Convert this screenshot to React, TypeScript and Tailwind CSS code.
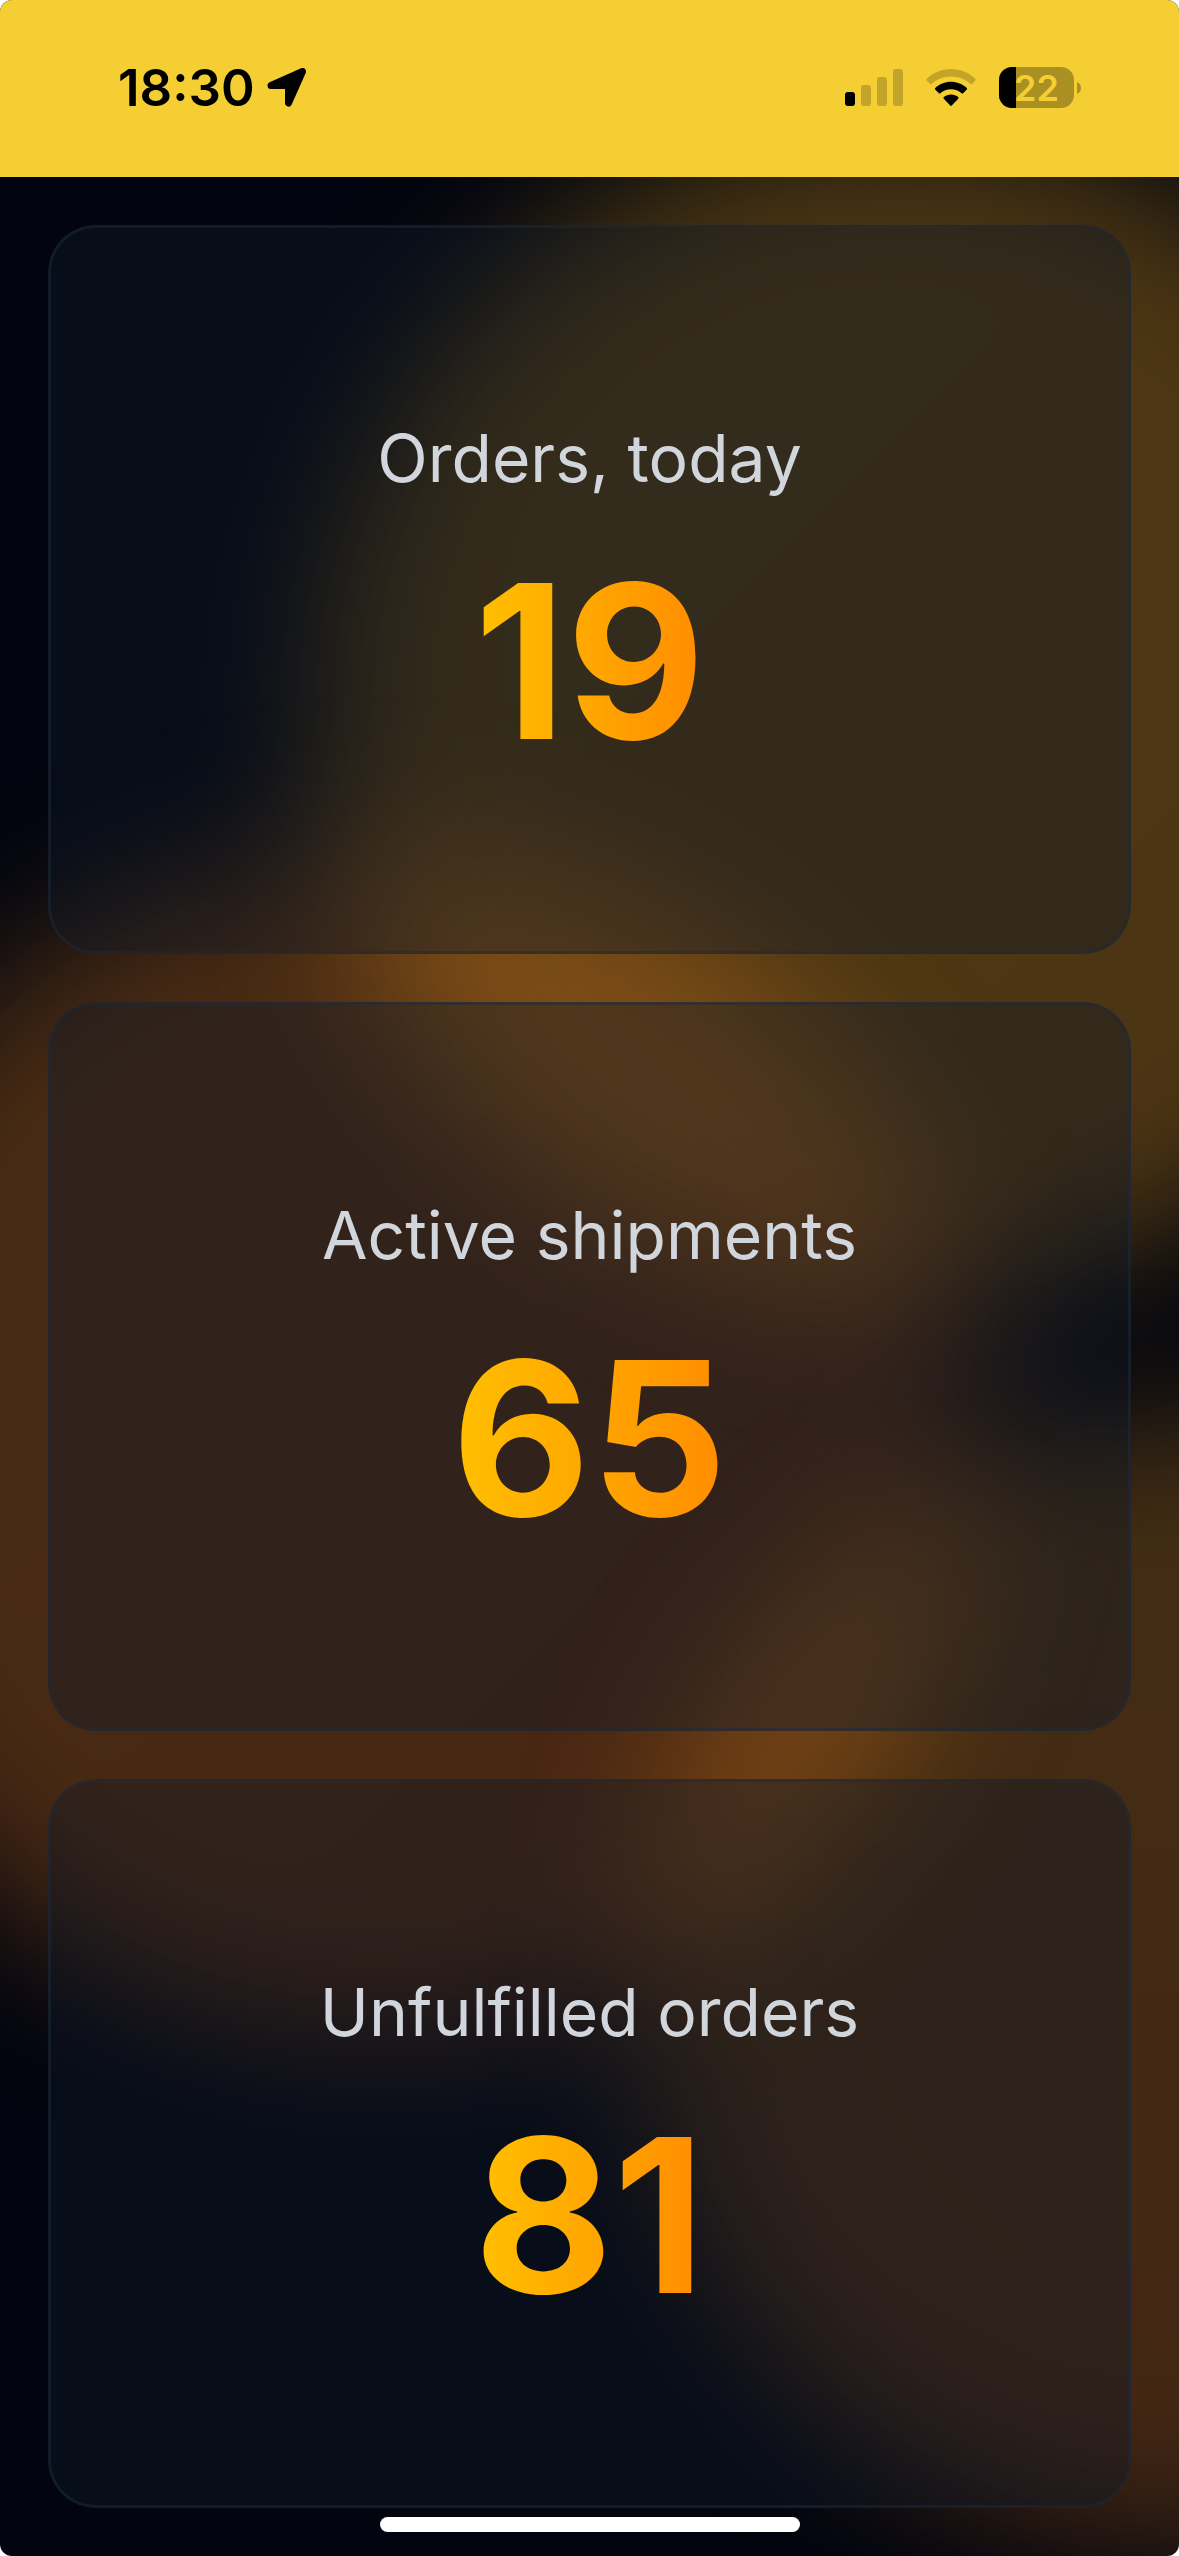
interface Stat {
  label: string;
  value: number;
}

const stats: Stat[] = [
  { label: 'Orders, today', value: 19 },
  { label: 'Active shipments', value: 65 },
  { label: 'Unfulfilled orders', value: 81 },
];

function LocationIcon() {
  return (
    <svg className="w-10 h-10" viewBox="0 0 40 40" fill="currentColor" aria-hidden="true">
      <path
        d="M4 17.500 35.500 3.500 21.500 35V17.500Z"
        stroke="currentColor"
        strokeWidth={7}
        strokeLinejoin="round"
      />
    </svg>
  );
}

function SignalIcon() {
  return (
    <svg className="w-[58px] h-[38px]" viewBox="0 0 58 38" fill="currentColor" aria-hidden="true">
      <rect x="0" y="23" width="10" height="14" rx="3" />
      <g opacity="0.2">
        <rect x="16" y="16" width="10" height="21" rx="3" />
        <rect x="32" y="8" width="10" height="29" rx="3" />
        <rect x="48" y="0" width="10" height="37" rx="3" />
      </g>
    </svg>
  );
}

function WifiIcon() {
  return (
    <svg className="w-[50px] h-[38px]" viewBox="0 0 50 38" fill="currentColor" aria-hidden="true">
      <path
        opacity="0.2"
        d="M25 0C15.500 0 6.800 3.800 .6 9.900c-.5.500-.5 1.100 0 1.600l3.500 3.500c.5.500 1.100.500 1.600 0C10.700 10.200 17.500 7.500 25 7.500s14.300 2.700 19.300 7.500c.5.500 1.100.500 1.600 0l3.500-3.500c.5-.5.500-1.100 0-1.600C43.200 3.800 34.500 0 25 0Z"
      />
      <path d="M25 12.800c-6.100 0-11.700 2.400-15.800 6.200-.5.500-.5 1.100 0 1.600l3.600 3.600c.5.500 1.100.500 1.600 0 2.800-2.500 6.500-4 10.600-4s7.800 1.500 10.600 4c.5.500 1.100.500 1.600 0l3.600-3.600c.5-.5.500-1.100 0-1.600-4.100-3.800-9.700-6.200-15.800-6.200Z" />
      <path d="M25 25.500c-2.800 0-5.300 1-7.200 2.600-.5.500-.5 1.100 0 1.600l6.400 6.800c.5.500 1.100.500 1.600 0l6.400-6.800c.5-.5.500-1.100 0-1.600-1.900-1.600-4.400-2.600-7.200-2.600Z" />
    </svg>
  );
}

function BatteryIcon({ level }: { level: number }) {
  return (
    <div className="flex items-center gap-[3px]">
      <div className="relative flex h-[41px] w-[75px] items-center justify-center overflow-hidden rounded-[13px] bg-black/30">
        <div className="absolute inset-y-0 left-0 bg-black" style={{ width: `${level}%` }} />
        <span className="relative text-[36px] leading-none font-semibold text-[#f4ce33]">
          {level}
        </span>
      </div>
      <svg className="w-1 h-3" viewBox="0 0 4 12" fill="currentColor" aria-hidden="true">
        <path opacity="0.3" d="M0 0c2.500 1 4 3.300 4 6s-1.500 5-4 6Z" />
      </svg>
    </div>
  );
}

function StatusBar() {
  return (
    <header className="flex h-[177px] items-center justify-between bg-[#f4ce33] pr-[98px] pb-[2px] pl-[118px] text-black">
      <div className="flex items-center gap-3">
        <time className="text-[51px] leading-none font-semibold">18:30</time>
        <LocationIcon />
      </div>
      <div className="flex items-center gap-[23px]">
        <SignalIcon />
        <WifiIcon />
        <BatteryIcon level={22} />
      </div>
    </header>
  );
}

/* Soft coloured glow behind the cards */
function Glow() {
  return (
    <svg
      className="absolute inset-0 h-full w-full"
      viewBox="0 0 1179 2379"
      preserveAspectRatio="none"
      aria-hidden="true"
    >
      <defs>
        <filter id="soften" x="-40%" y="-40%" width="180%" height="180%" colorInterpolationFilters="sRGB">
          <feGaussianBlur stdDeviation="72" />
        </filter>
        <linearGradient id="amber" x1="0" y1="0" x2="1" y2="1">
          <stop offset="0" stopColor="#f8b01c" />
          <stop offset="1" stopColor="#fca41e" />
        </linearGradient>
        <linearGradient id="orange" x1="0" y1="0" x2="1" y2="1">
          <stop offset="0" stopColor="#f89020" />
          <stop offset="1" stopColor="#f4741c" />
        </linearGradient>
        <linearGradient id="tangerine" x1="0" y1="0" x2="0" y2="1">
          <stop offset="0" stopColor="#fba320" />
          <stop offset="1" stopColor="#fb8420" />
        </linearGradient>
      </defs>
      <g filter="url(#soften)">
        <circle cx="900" cy="535" r="585" fill="url(#amber)" opacity="0.3" />
      </g>
      <g filter="url(#soften)">
        <circle cx="385" cy="1265" r="595" fill="url(#orange)" opacity="0.29" />
      </g>
      <g filter="url(#soften)">
        <circle cx="1200" cy="1805" r="565" fill="url(#tangerine)" opacity="0.26" />
      </g>
    </svg>
  );
}

function StatCard({ label, value }: Stat) {
  return (
    <section className="flex flex-col items-center justify-center rounded-[48px] border-[3px] border-gray-800/50 bg-gray-900/40">
      <h2 className="mb-12 text-[66px] leading-[96px] font-normal text-gray-300">{label}</h2>
      <p className="bg-linear-to-r from-[#ffc000] to-[#ff8c00] bg-clip-text text-[214px] leading-[216px] font-bold text-transparent">
        {value}
      </p>
    </section>
  );
}

function App() {
  return (
    <div className="bg-white">
      <div className="flex min-h-screen flex-col overflow-hidden rounded-xl bg-[#02050f] font-['Inter',sans-serif]">
        <StatusBar />
        <main className="relative flex flex-1 flex-col overflow-hidden">
          <Glow />
          <div className="relative grid flex-1 auto-rows-fr gap-12 p-12">
            {stats.map((stat) => (
              <StatCard key={stat.label} label={stat.label} value={stat.value} />
            ))}
          </div>
          <div className="absolute inset-x-0 bottom-6 mx-auto h-[15px] w-[420px] rounded-full bg-white" />
        </main>
      </div>
    </div>
  );
}

export default App;
